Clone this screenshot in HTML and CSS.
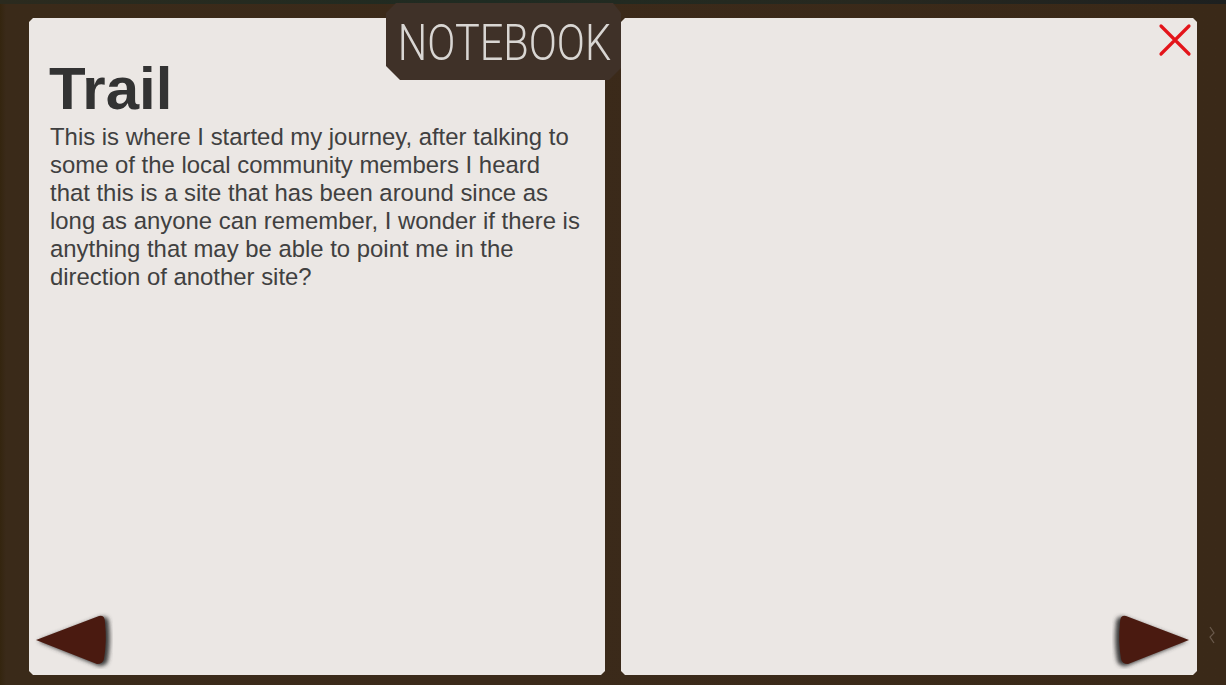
FILE: index.html
```html
<!DOCTYPE html>
<html>
<head>
<meta charset="utf-8">
<link rel="stylesheet" href="styles.css">
</head>
<body>
<div class="screen">
  <div class="topstrip"></div>
  <div class="book">
    <section class="page page-left">
      <h1 class="title">Trail</h1>
      <p class="body">This is where I started my journey, after talking to some of the local community members I heard that this is a site that has been around since as long as anyone can remember, I wonder if there is anything that may be able to point me in the direction of another site?</p>
      <div class="spacer"></div>
      <div class="nav nav-left">
        <svg width="80" height="60" viewBox="0 0 80 60"><defs><filter id="sh" x="-30%" y="-30%" width="160%" height="160%"><feGaussianBlur stdDeviation="2.2"/></filter></defs>
          <path d="M3 31 L66 7 Q74 5 74 14 Q76 32 73 50 Q72 56 64 56 Z" fill="#3a3a3a" filter="url(#sh)" transform="translate(2 1)"/>
          <path d="M3 31 L66 7 Q72 5 72 14 Q74 32 71 50 Q70 55 64 55 Z" fill="#4a1a10"/>
        </svg>
      </div>
    </section>
    <div class="spine"></div>
    <section class="page page-right">
      <div class="close">
        <svg width="34" height="34" viewBox="0 0 34 34"><path d="M3 3 L31 31 M31 3 L3 31" stroke="#e3141a" stroke-width="3.2" stroke-linecap="round"/></svg>
      </div>
      <div class="spacer"></div>
      <div class="nav nav-right">
        <svg width="80" height="60" viewBox="0 0 80 60"><defs><filter id="sh2" x="-30%" y="-30%" width="160%" height="160%"><feGaussianBlur stdDeviation="2.2"/></filter></defs>
          <path d="M77 31 L14 7 Q6 5 6 14 Q4 32 7 50 Q8 56 16 56 Z" fill="#3a3a3a" filter="url(#sh2)" transform="translate(-2 1)"/>
          <path d="M77 31 L14 7 Q8 5 8 14 Q6 32 9 50 Q10 55 16 55 Z" fill="#4a1a10"/>
        </svg>
      </div>
    </section>
    <div class="edge">
      <svg width="10" height="22" viewBox="0 0 10 22"><path d="M3 2 L7 8 L3 12 L7 18" stroke="#6a5a4c" stroke-width="1.2" fill="none"/></svg>
    </div>
  </div>
  <div class="tab"><span class="tab-text">NOTEBOOK</span></div>
</div>
</body>
</html>
```
FILE: styles.css
```css
html, body {
  margin: 0;
  padding: 0;
}
body {
  width: 1226px;
  height: 685px;
  overflow: hidden;
  background: #392818;
  font-family: "Liberation Sans", Arial, sans-serif;
}
.screen {
  position: relative;
  width: 1226px;
  height: 685px;
  background: linear-gradient(90deg, #34250f 0px, #3a2a19 6px, #3b2a1a 40%, #3a2918 100%);
}
.topstrip {
  height: 4px;
  background: linear-gradient(90deg, #2b2a1e, #1f2b22 40%, #27281f 70%, #1d2020);
}
.book {
  display: flex;
  padding: 14px 0 0 29px;
  height: 657px;
}
.page {
  background: #ebe7e4;
  width: 576px;
  height: 657px;
  display: flex;
  flex-direction: column;
  box-sizing: border-box;
  clip-path: polygon(4px 0, calc(100% - 4px) 0, 100% 4px, 100% calc(100% - 4px), calc(100% - 4px) 100%, 4px 100%, 0 calc(100% - 4px), 0 4px);
}
.page-left {
  padding: 38px 21px 6px 21px;
}
.page-right {
  padding: 5px 5px 6px 10px;
}
.spine {
  width: 16px;
  flex: none;
}
.title {
  margin: 0 0 0 -1px;
  font-size: 60px;
  line-height: 66px;
  font-weight: bold;
  color: #333333;
}
.body {
  margin: 1px 0 0 0;
  font-size: 23.9px;
  line-height: 28px;
  color: #404040;
  width: 531px;
}
.spacer {
  flex: 1;
}
.nav {
  height: 60px;
  display: flex;
}
.nav-left {
  margin-left: -17px;
}
.nav-right {
  justify-content: flex-end;
}
.close {
  display: flex;
  justify-content: flex-end;
}
.edge {
  width: 29px;
  display: flex;
  align-items: flex-end;
  justify-content: center;
  padding-bottom: 28px;
}
.tab {
  position: absolute;
  left: 386px;
  top: 3px;
  width: 235px;
  height: 77px;
  background: #3f3128;
  clip-path: polygon(10px 0, calc(100% - 8px) 0, 100% 10px, 100% calc(100% - 12px), calc(100% - 12px) 100%, 14px 100%, 0 calc(100% - 14px), 0 10px);
  display: flex;
  align-items: center;
  justify-content: center;
  filter: drop-shadow(0 2px 3px rgba(0,0,0,0.3));
}
.tab-text {
  display: inline-block;
  font-family: "Roboto", "DejaVu Sans", sans-serif;
  font-weight: 300;
  font-size: 50px;
  line-height: 50px;
  color: #d9d6d3;
  transform: scaleX(0.83);
  margin-top: 2px;
  margin-left: 2px;
  white-space: nowrap;
}
```
